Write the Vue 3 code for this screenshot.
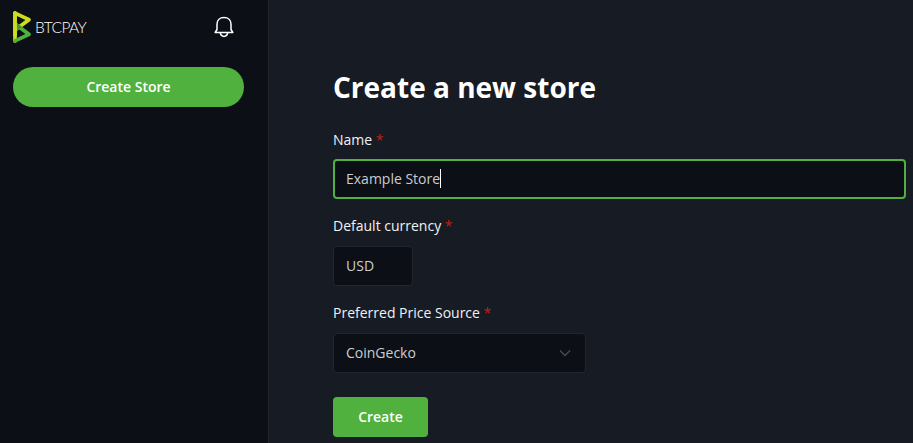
<script setup>
import { ref } from 'vue'

const name = ref('Example Store')
const currency = ref('USD')
const source = ref('CoinGecko')
</script>

<template>
  <div class="layout">
    <aside class="sidebar">
      <header class="brand-row">
        <a class="brand">
          <svg class="brand-mark" viewBox="0 0 47 84" aria-hidden="true">
            <path fill="#cedc21" d="M5.206 83.433a4.86 4.86 0 01-4.859-4.861V5.431a4.86 4.86 0 119.719 0v73.141a4.861 4.861 0 01-4.86 4.861" />
            <path fill="#51b13e" d="M5.209 83.433a4.862 4.862 0 01-2.086-9.253L32.43 60.274 2.323 38.093a4.861 4.861 0 015.766-7.826l36.647 26.999a4.864 4.864 0 01-.799 8.306L7.289 82.964a4.866 4.866 0 01-2.08.469" />
            <path fill="#cedc21" d="M5.211 54.684a4.86 4.86 0 01-2.887-8.774L32.43 23.73 3.123 9.821a4.861 4.861 0 014.166-8.784l36.648 17.394a4.86 4.86 0 01.799 8.305l-36.647 27a4.844 4.844 0 01-2.878.948" />
            <path fill="#51b13e" d="M10.066 31.725v20.553L24.01 42.006z" />
            <path fill="#3b9a40" d="M10.066 31.725v20.553L24.01 42.006z" />
            <path fill="#cedc21" d="M10.066 5.431A4.861 4.861 0 005.206.57 4.86 4.86 0 00.347 5.431v61.165h9.72V5.431z" />
          </svg>
          <span class="brand-name">BTCPAY</span>
        </a>
        <svg class="bell" viewBox="0 0 20 22" aria-hidden="true">
          <path d="M1.2 16.5h17.600L17 13.500V8.200C17 4 14 1.500 10 1.500S3 4 3 8.200v5.300z" />
          <path d="M6.300 16.700c.3 2.300 1.800 3.700 3.700 3.700s3.400-1.400 3.700-3.700" />
        </svg>
      </header>
      <button class="create-store">Create Store</button>
    </aside>
    <main class="content">
      <h1>Create a new store</h1>
      <label>Name <span class="req">*</span></label>
      <div class="field focused">{{ name }}<i class="caret"></i></div>
      <label>Default currency <span class="req">*</span></label>
      <div class="field currency">{{ currency }}</div>
      <label>Preferred Price Source <span class="req">*</span></label>
      <div class="field select">
        {{ source }}
        <svg class="chevron" viewBox="0 0 12 8" aria-hidden="true"><path d="M1 1.500l5 5 5-5" /></svg>
      </div>
      <button class="create">Create</button>
    </main>
  </div>
</template>

<style>
body {
  background: #171b23;
}
</style>

<style scoped>
.layout {
  display: flex;
  height: 443px;
  overflow: hidden;
  background: #171b23;
  font: 14px/21px 'Open Sans', sans-serif;
  color: #f0f2f4;
}
.sidebar {
  box-sizing: border-box;
  flex: none;
  width: 269px;
  padding: 11px 24px 0 13px;
  background: #0c1016;
  border-right: 1px solid #22262d;
}
.brand-row {
  display: flex;
  align-items: center;
  justify-content: space-between;
  height: 32px;
  padding-right: 10px;
}
.brand {
  display: flex;
  align-items: center;
  gap: 4px;
}
.brand-mark {
  width: 18px;
  height: 32px;
}
.brand-name {
  font-family: Lato, sans-serif;
  font-weight: 300;
  font-size: 15.5px;
  letter-spacing: -0.600px;
  color: #fff;
}
.bell {
  width: 20px;
  height: 22px;
  fill: none;
  stroke: #fff;
  stroke-width: 1.5;
  stroke-linejoin: round;
}
button {
  display: block;
  height: 40px;
  padding: 0 0 2px;
  border: 0;
  background: #51b13e;
  color: #fff;
  font: 600 14px/21px 'Open Sans', sans-serif;
}
.create-store {
  width: 231px;
  margin-top: 24px;
  border-radius: 20px;
}
.content {
  flex: 1;
  min-width: 0;
  padding: 70px 7px 0 64px;
}
h1 {
  margin: 0 0 24px;
  font-size: 28px;
  line-height: 35px;
  font-weight: 700;
  color: #fff;
}
label {
  display: block;
  margin-bottom: 9px;
}
.field + label {
  margin-bottom: 10px;
}
.req {
  color: #c4200e;
}
.field {
  box-sizing: border-box;
  display: flex;
  align-items: center;
  height: 40px;
  margin-bottom: 16px;
  padding: 0 12px 2px;
  border: 1px solid #22272f;
  border-radius: 4px;
  background: #0c1016;
  color: #c9ccd0;
}
.focused {
  padding: 0 11px 2px;
  border: 2px solid #51b13e;
}
.caret {
  width: 1px;
  height: 19px;
  background: #fff;
}
.currency {
  width: 80px;
}
.select {
  justify-content: space-between;
  width: 253px;
  margin-bottom: 24px;
  padding-right: 14px;
}
.chevron {
  width: 12px;
  height: 8px;
  margin-top: 2px;
  fill: none;
  stroke: #484d55;
  stroke-width: 1.3;
}
.create {
  width: 95px;
  border-radius: 4px;
}
</style>
